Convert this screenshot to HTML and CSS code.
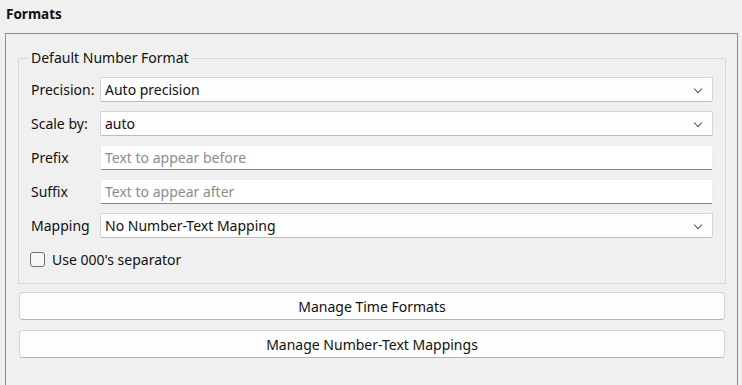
FILE: index.html
```html
<!DOCTYPE html>
<html lang="en">
<head>
  <meta charset="UTF-8">
  <meta name="viewport" content="width=device-width, initial-scale=1.0">
  <title>Formats</title>
  <link rel="stylesheet" href="styles.css">
</head>
<body>
  <div class="title">Formats</div>
  <div class="panel">
    <fieldset class="group">
      <legend>Default Number Format</legend>
      <div class="form">
        <label>Precision:</label>
        <div class="combo">Auto precision<span class="chevron"></span></div>

        <label>Scale by:</label>
        <div class="combo">auto<span class="chevron"></span></div>

        <label>Prefix</label>
        <input class="field" type="text" placeholder="Text to appear before">

        <label>Suffix</label>
        <input class="field" type="text" placeholder="Text to appear after">

        <label>Mapping</label>
        <div class="combo">No Number-Text Mapping<span class="chevron"></span></div>
      </div>
      <div class="check-row">
        <span class="checkbox"></span>
        <span>Use 000's separator</span>
      </div>
    </fieldset>

    <div class="buttons">
      <button>Manage Time Formats</button>
      <button>Manage Number-Text Mappings</button>
    </div>
  </div>
</body>
</html>
```

FILE: styles.css
```css
body {
  margin: 0;
  background: #f0f0f0;
  font-family: 'Noto Sans', 'Open Sans', sans-serif;
  font-size: 14px;
  color: #111;
  height: 385px;
  overflow: hidden;
}

.title {
  font-weight: bold;
  font-size: 13.5px;
  padding: 5px 0 0 6px;
  height: 33px;
  box-sizing: border-box;
}

.panel {
  margin-left: 5px;
  width: 733px;
  height: 360px;
  border: 1px solid #8b8f96;
  border-bottom: none;
  box-sizing: border-box;
  padding: 15px 11px 0 12px;
}

.group {
  margin: 0;
  padding: 10px 12px 14px 12px;
  border: 1px solid #dadada;
  min-width: 0;
}

.group legend {
  padding: 0 3px;
  margin-left: -3px;
  line-height: 18px;
}

.form {
  display: grid;
  grid-template-columns: 69px 1fr;
  row-gap: 9px;
  align-items: center;
}

.combo {
  position: relative;
  height: 25px;
  box-sizing: border-box;
  background: #fdfdfd;
  border: 1px solid #d4d4d4;
  border-bottom-color: #bcbcbc;
  border-radius: 2px;
  padding: 0 4px;
  line-height: 23px;
}

.chevron {
  position: absolute;
  right: 11px;
  top: 8px;
  width: 5px;
  height: 5px;
  border-right: 1px solid #555;
  border-bottom: 1px solid #555;
  transform: rotate(45deg);
}

.field {
  height: 25px;
  box-sizing: border-box;
  margin: 0;
  background: #fff;
  border: 1px solid #ececec;
  border-bottom: 1px solid #868686;
  border-radius: 2px;
  padding: 0 4px;
  font: inherit;
  color: inherit;
  outline: none;
}

.field::placeholder {
  color: #8c8c8c;
}

.check-row {
  display: flex;
  align-items: center;
  gap: 7px;
  margin-top: 12px;
}

.checkbox {
  width: 13px;
  height: 13px;
  border: 1px solid #6f6f6f;
  border-radius: 3px;
  background: #f6f6f6;
  margin-left: -1px;
}

.buttons {
  display: flex;
  flex-direction: column;
  gap: 10px;
  margin-top: 8px;
  padding: 0 1px 0 1px;
}

button {
  height: 28px;
  font: inherit;
  color: inherit;
  background: #fdfdfd;
  border: 1px solid #d4d4d4;
  border-bottom-color: #b5b5b5;
  border-radius: 4px;
  padding: 0;
}
```
